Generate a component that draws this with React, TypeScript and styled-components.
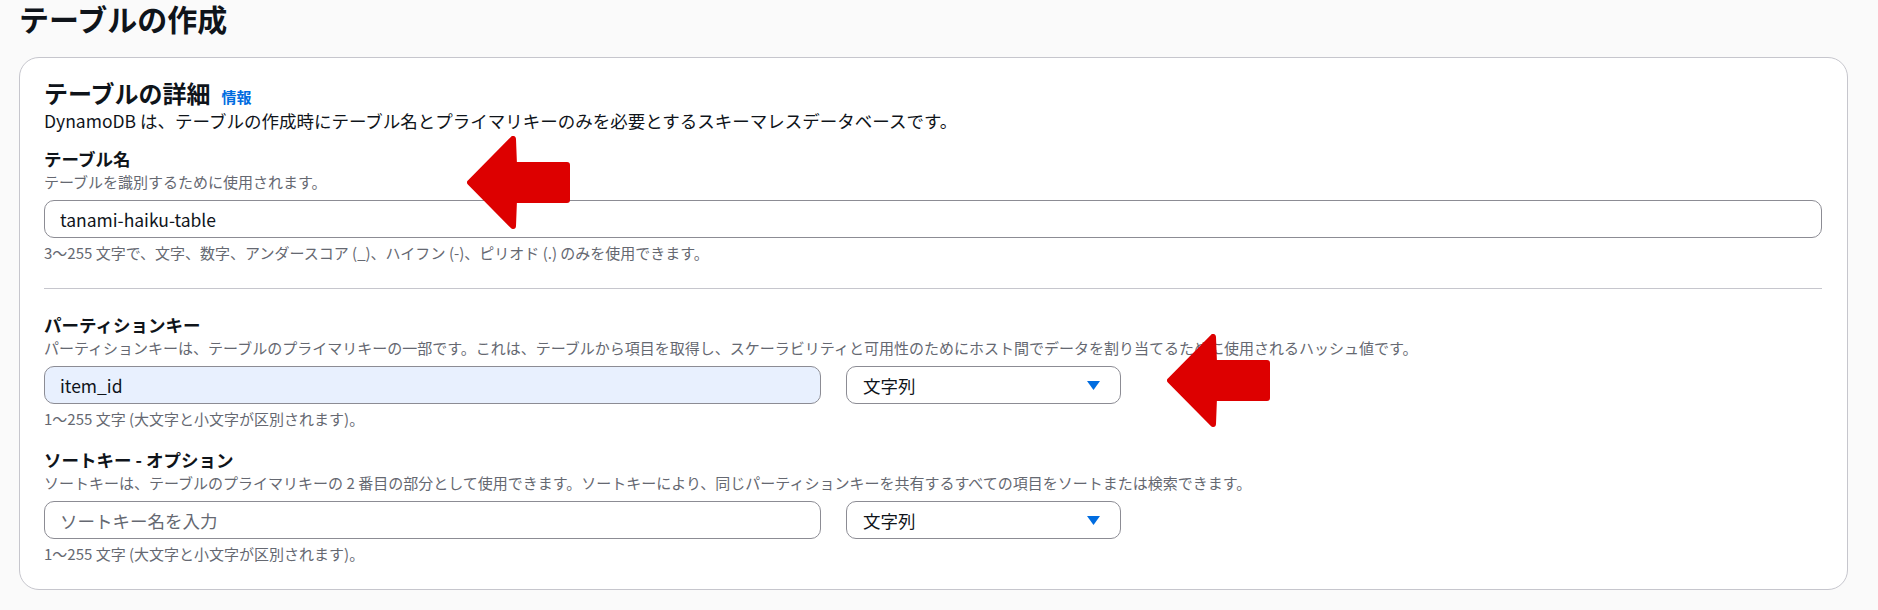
import styled, { createGlobalStyle } from "styled-components";

const GlobalStyle = createGlobalStyle`
	html, body {
		margin: 0;
		padding: 0;
		background: #fafafa;
	}
	body {
		font-family: "Noto Sans CJK JP", "Noto Sans", sans-serif;
		color: #0f141a;
	}
`;

const Page = styled.div`
	position: relative;
	width: 1878px;
	height: 610px;
	box-sizing: border-box;
	padding: 0 30px 0 19px;
	overflow: hidden;
`;
const PageTitle = styled.h1`
	margin: 0 0 21px;
	font-size: 30px;
	line-height: 36px;
	font-weight: 700;
`;
const Card = styled.section`
	box-sizing: border-box;
	height: 533px;
	background: #ffffff;
	border: 1px solid #c6c6cd;
	border-radius: 20px;
	padding: 20px 25px 24px 24px;
`;
const CardHeader = styled.div`
	display: flex;
	align-items: baseline;
	gap: 11px;
`;
const CardTitle = styled.h2`
	margin: 0;
	font-size: 24px;
	line-height: 30px;
	font-weight: 700;
`;
const InfoLink = styled.a`
	font-size: 15px;
	font-weight: 700;
	color: #006ce0;
	text-decoration: none;
`;
const CardDesc = styled.p`
	margin: 0 0 13px;
	font-size: 17.5px;
	line-height: 25px;
`;
const Field = styled.div<{ $gapAfter?: number }>`
	display: flex;
	flex-direction: column;
	margin-bottom: ${(p) => p.$gapAfter ?? 0}px;
`;
const Label = styled.label`
	font-size: 17.5px;
	line-height: 26px;
	font-weight: 700;
`;
const Desc = styled.div`
	font-size: 15px;
	line-height: 20px;
	color: #656871;
	margin-bottom: 8px;
`;
const Hint = styled.div`
	font-size: 15px;
	line-height: 20px;
	color: #656871;
	margin-top: 5px;
`;
const Row = styled.div`
	display: grid;
	grid-template-columns: 777px 275px;
	gap: 25px;
`;
const TextInput = styled.input<{ $filled?: boolean }>`
	box-sizing: border-box;
	width: 100%;
	height: 38px;
	padding: 0 15px;
	border: 1px solid #8c8c94;
	border-radius: 10px;
	background: ${(p) => (p.$filled ? "#e8f0fe" : "#ffffff")};
	font-family: inherit;
	font-size: 17.5px;
	color: #0f141a;
	outline: none;
	&::placeholder {
		color: #656871;
	}
`;
const Select = styled.button`
	box-sizing: border-box;
	height: 38px;
	display: flex;
	align-items: center;
	justify-content: space-between;
	padding: 0 20px 0 16px;
	border: 1px solid #8c8c94;
	border-radius: 10px;
	background: #ffffff;
	font-family: inherit;
	font-size: 17.5px;
	color: #0f141a;
`;
const Divider = styled.hr`
	border: 0;
	border-top: 1px solid #c6c6cd;
	margin: 25px 0 23px;
`;
const Arrow = styled.svg<{ $x: number; $y: number }>`
	position: absolute;
	left: ${(p) => p.$x}px;
	top: ${(p) => p.$y}px;
`;

const Caret = () => (
	<svg width="13" height="9" viewBox="0 0 13 9">
		<polygon points="0,0 13,0 6.5,9" fill="#006ce0" />
	</svg>
);

const RedArrow = ({ x, y }: { x: number; y: number }) => (
	<Arrow $x={x} $y={y} width="104" height="93" viewBox="0 0 104 93">
		<polygon
			points="3,46.5 46,3 47,29 100,29 100,64 47,64 46,90"
			fill="#dd0000"
			stroke="#dd0000"
			strokeWidth="6"
			strokeLinejoin="round"
		/>
	</Arrow>
);

const TypeSelect = () => (
	<Select type="button">
		<span>文字列</span>
		<Caret />
	</Select>
);

const App = () => {
	return (
		<>
			<GlobalStyle />
			<Page>
				<PageTitle>テーブルの作成</PageTitle>
				<Card>
					<CardHeader>
						<CardTitle>テーブルの詳細</CardTitle>
						<InfoLink href="#">情報</InfoLink>
					</CardHeader>
					<CardDesc>
						DynamoDB は、テーブルの作成時にテーブル名とプライマリキーのみを必要とするスキーマレスデータベースです。
					</CardDesc>

					<Field>
						<Label>テーブル名</Label>
						<Desc>テーブルを識別するために使用されます。</Desc>
						<TextInput defaultValue="tanami-haiku-table" />
						<Hint>3〜255 文字で、文字、数字、アンダースコア (_)、ハイフン (-)、ピリオド (.) のみを使用できます。</Hint>
					</Field>

					<Divider />

					<Field $gapAfter={18}>
						<Label>パーティションキー</Label>
						<Desc>
							パーティションキーは、テーブルのプライマリキーの一部です。これは、テーブルから項目を取得し、スケーラビリティと可用性のためにホスト間でデータを割り当てるために使用されるハッシュ値です。
						</Desc>
						<Row>
							<TextInput $filled defaultValue="item_id" />
							<TypeSelect />
						</Row>
						<Hint>1〜255 文字 (大文字と小文字が区別されます)。</Hint>
					</Field>

					<Field>
						<Label>ソートキー - オプション</Label>
						<Desc>
							ソートキーは、テーブルのプライマリキーの 2 番目の部分として使用できます。ソートキーにより、同じパーティションキーを共有するすべての項目をソートまたは検索できます。
						</Desc>
						<Row>
							<TextInput placeholder="ソートキー名を入力" />
							<TypeSelect />
						</Row>
						<Hint>1〜255 文字 (大文字と小文字が区別されます)。</Hint>
					</Field>
				</Card>
				<RedArrow x={467} y={136} />
				<RedArrow x={1167} y={334} />
			</Page>
		</>
	);
};

export default App;
